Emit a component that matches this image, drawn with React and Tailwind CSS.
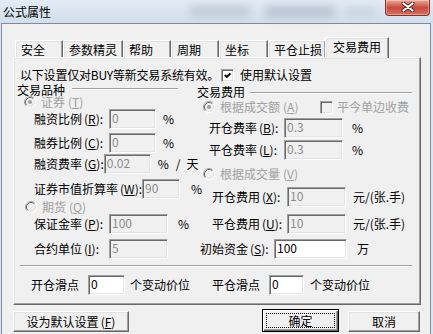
import React from 'react';

const SUNKEN =
  'border border-t-[#a0a0a0] border-l-[#a0a0a0] border-b-white border-r-white shadow-[inset_1px_1px_0_#696969,inset_-1px_-1px_0_#e3e3e3]';

function Radio({ checked }) {
  return (
    <svg width="12" height="12" viewBox="0 0 12 12" className="shrink-0">
      <circle cx="6" cy="6" r="5" fill="#f0f0f0" />
      <path d="M2.11 9.89A5.5 5.5 0 0 1 9.89 2.11" stroke="#a0a0a0" fill="none" />
      <path d="M9.89 2.11A5.5 5.5 0 0 1 2.11 9.89" stroke="#ffffff" fill="none" />
      <path d="M2.82 9.18A4.5 4.5 0 0 1 9.18 2.82" stroke="#696969" fill="none" />
      <path d="M9.18 2.82A4.5 4.5 0 0 1 2.82 9.18" stroke="#e3e3e3" fill="none" />
      {checked && <circle cx="6" cy="6" r="2" fill="#a0a0a0" />}
    </svg>
  );
}

function Check({ checked, disabled }) {
  return (
    <div
      className={`w-[13px] h-[13px] shrink-0 flex items-center justify-center ${SUNKEN} ${
        disabled ? 'bg-[#f0f0f0]' : 'bg-white'
      }`}
    >
      {checked && (
        <svg width="7" height="7" viewBox="0 0 7 7">
          <polyline points="0.8,3 2.8,5 6.4,1.4" stroke="#000" strokeWidth="1.9" fill="none" />
        </svg>
      )}
    </div>
  );
}

function Edit({ w, v, white }) {
  return (
    <div
      className={`${w} h-[20px] shrink-0 pl-[2px] pt-[2px] leading-[12px] ${SUNKEN} ${
        white ? 'bg-white text-black' : 'bg-[#f0f0f0] text-[#8c8c8c]'
      }`}
    >
      {v}
    </div>
  );
}

function L({ t, m, tail = ':' }) {
  return (
    <span className="whitespace-nowrap">
      {t}
      <span className="ml-[2px]">
        (<span className="underline underline-offset-1">{m}</span>)
      </span>
      {tail}
    </span>
  );
}

function Etched({ cls }) {
  return <div className={`h-0 border-t border-t-[#a0a0a0] border-b border-b-white ${cls}`} />;
}

const TABS = [
  { t: '安全', w: 'w-[48px]' },
  { t: '参数精灵', w: 'w-[60px]' },
  { t: '帮助', w: 'w-[48px]' },
  { t: '周期', w: 'w-[48px]' },
  { t: '坐标', w: 'w-[49px]' },
  { t: '平仓止损', w: 'w-[58px]' },
];

export default function App() {
  return (
    <div className="w-[433px] h-[334px] overflow-hidden relative bg-[#dce6f2] text-black text-[12px] leading-[12px] font-['Noto_Sans_CJK_SC','Noto_Sans',sans-serif]">
      {/* title bar */}
      <div className="h-[23px] flex items-start relative bg-gradient-to-b from-[#e3ebf5] to-[#d2deec]">
        <div className="absolute left-[190px] top-[6px] w-[60px] h-[10px] bg-[#aab7c6] blur-[4px] opacity-60" />
        <div className="absolute left-[265px] top-[6px] w-[70px] h-[11px] bg-[#9fadbd] blur-[4px] opacity-60" />
        <div className="absolute left-[345px] top-[8px] w-[30px] h-[8px] bg-[#b3bfcc] blur-[4px] opacity-50" />
        <div className="relative pl-[3px] pt-[6px] text-[12px] leading-[12px]">公式属性</div>
        <div className="relative ml-auto mr-[3px] w-[45px] h-[16px] rounded-b-[4px] border border-t-0 border-[#8b2f25] bg-gradient-to-b from-[#e9a797] via-[#c94a3c] to-[#d8705e] flex items-start justify-center pt-[2px] shadow-[inset_0_0_0_1px_rgba(255,255,255,0.35)]">
          <svg width="14" height="10" viewBox="0 0 14 10">
            <path d="M2.5 1.5 L11.5 8.5 M11.5 1.5 L2.5 8.5" stroke="#4a2a26" strokeWidth="4" strokeLinecap="round" />
            <path d="M2.5 1.5 L11.5 8.5 M11.5 1.5 L2.5 8.5" stroke="#ffffff" strokeWidth="2.2" strokeLinecap="round" />
          </svg>
        </div>
      </div>

      {/* client */}
      <div className="ml-[1px] mr-[2px] h-[311px] border-l border-r border-t border-[#7d8b9a] bg-[#f0f0f0] flex flex-col">
        {/* tabs */}
        <div className="mt-[13px] ml-[13px] h-[20px] flex items-end">
          {TABS.map((tb) => (
            <div
              key={tb.t}
              className={`${tb.w} h-[17px] pl-[5px] pt-[3px] rounded-tl-[2px] border-t border-l border-white border-r border-r-[#696969] shadow-[inset_-1px_0_0_#a0a0a0,inset_1px_1px_0_#e3e3e3] whitespace-nowrap`}
            >
              {tb.t}
            </div>
          ))}
          <div className="relative z-10 -ml-[1px] -mb-[1px] w-[64px] h-[21px] pl-[7px] pt-[3px] rounded-tl-[2px] bg-[#f0f0f0] border-t border-l border-white border-r border-r-[#696969] shadow-[inset_-1px_0_0_#a0a0a0,inset_1px_1px_0_#e3e3e3] whitespace-nowrap">
            交易费用
          </div>
        </div>

        {/* panel */}
        <div className="ml-[11px] w-[408px] h-[248px] flex flex-col border-t border-l border-white border-r border-b border-r-[#696969] border-b-[#696969] shadow-[inset_-1px_-1px_0_#a0a0a0,inset_1px_1px_0_#e3e3e3]">
          {/* notice row */}
          <div className="mt-[10px] h-[14px] flex items-center pl-[6px]">
            <span className="w-[201px] whitespace-nowrap tracking-[-0.2px]">以下设置仅对BUY等新交易系统有效。</span>
            <Check checked />
            <span className="ml-[6px]">使用默认设置</span>
          </div>

          <div className="flex">
            {/* left column */}
            <div className="w-[183px] flex flex-col">
              <div className="mt-[2px] h-[12px] flex items-start pl-[3px]">
                <span className="whitespace-nowrap">交易品种</span>
                <Etched cls="mt-[4px] ml-[7px] w-[106px]" />
              </div>
              <div className="h-[12px] flex items-center pl-[10px] text-[#a0a0a0]">
                <Radio checked />
                <span className="ml-[5px]">
                  证券<span className="ml-[3px]">(<span className="underline underline-offset-1">T</span>)</span>
                </span>
              </div>
              <div className="mt-[1px] h-[20px] flex items-center pl-[20px]">
                <div className="w-[75px]"><L t="融资比例" m="R" /></div>
                <Edit w="w-[47px]" v="0" />
                <span className="ml-[7px]">%</span>
              </div>
              <div className="mt-[4px] h-[20px] flex items-center pl-[20px]">
                <div className="w-[75px]"><L t="融券比例" m="C" /></div>
                <Edit w="w-[47px]" v="0" />
                <span className="ml-[7px]">%</span>
              </div>
              <div className="mt-[1px] h-[20px] flex items-center pl-[20px]">
                <div className="w-[75px]"><L t="融资费率" m="G" /></div>
                <Edit w="w-[47px]" v="0.02" />
                <span className="ml-[7px]">%</span>
                <span className="ml-[7px]">/</span>
                <span className="ml-[6px]">天</span>
              </div>
              <div className="mt-[5px] h-[20px] flex items-center pl-[20px]">
                <div className="w-[111px]"><L t="证券市值折算率" m="W" /></div>
                <Edit w="w-[38px]" v="90" />
                <span className="ml-[11px]">%</span>
              </div>
              <div className="mt-[2px] h-[12px] flex items-center pl-[11px] text-[#a0a0a0]">
                <Radio />
                <span className="ml-[5px]">
                  期货<span className="ml-[3px]">(<span className="underline underline-offset-1">Q</span>)</span>
                </span>
              </div>
              <div className="mt-[1px] h-[20px] flex items-center pl-[20px]">
                <div className="w-[75px]"><L t="保证金率" m="P" /></div>
                <Edit w="w-[59px]" v="100" />
                <span className="ml-[10px]">%</span>
              </div>
              <div className="mt-[5px] h-[20px] flex items-center pl-[20px]">
                <div className="w-[75px]"><L t="合约单位" m="I" /></div>
                <Edit w="w-[59px]" v="5" />
              </div>
            </div>

            {/* right column */}
            <div className="flex-1 flex flex-col">
              <div className="mt-[4px] h-[12px] flex items-start">
                <span className="whitespace-nowrap">交易费用</span>
                <Etched cls="mt-[6px] ml-[5px] w-[162px]" />
              </div>
              <div className="mt-[3px] h-[12px] flex items-center pl-[6px] text-[#a0a0a0]">
                <Radio checked />
                <span className="ml-[5px] w-[100px] whitespace-nowrap">
                  根据成交额<span className="ml-[3px]">(<span className="underline underline-offset-1">A</span>)</span>
                </span>
                <Check disabled />
                <span className="ml-[4px] whitespace-nowrap">平今单边收费</span>
              </div>
              <div className="mt-[5px] h-[20px] flex items-center pl-[12px]">
                <div className="w-[75px]"><L t="开仓费率" m="B" /></div>
                <Edit w="w-[59px]" v="0.3" />
                <span className="ml-[9px]">%</span>
              </div>
              <div className="mt-[2px] h-[20px] flex items-center pl-[12px]">
                <div className="w-[75px]"><L t="平仓费率" m="L" /></div>
                <Edit w="w-[59px]" v="0.3" />
                <span className="ml-[9px]">%</span>
              </div>
              <div className="mt-[8px] h-[12px] flex items-center pl-[6px] text-[#a0a0a0]">
                <Radio />
                <span className="ml-[5px] whitespace-nowrap">
                  根据成交量<span className="ml-[3px]">(<span className="underline underline-offset-1">V</span>)</span>
                </span>
              </div>
              <div className="mt-[7px] h-[20px] flex items-center pl-[15px]">
                <div className="w-[75px]"><L t="开仓费用" m="X" /></div>
                <Edit w="w-[59px]" v="10" />
                <span className="ml-[7px] whitespace-nowrap">元/(张.手)</span>
              </div>
              <div className="mt-[7px] h-[20px] flex items-center pl-[15px]">
                <div className="w-[75px]"><L t="平仓费用" m="U" /></div>
                <Edit w="w-[59px]" v="10" />
                <span className="ml-[7px] whitespace-nowrap">元/(张.手)</span>
              </div>
              <div className="mt-[5px] h-[20px] flex items-center pl-[3px]">
                <div className="w-[74px]"><L t="初始资金" m="S" /></div>
                <Edit w="w-[73px]" v="100" white />
                <span className="ml-[10px]">万</span>
              </div>
            </div>
          </div>

          <Etched cls="mt-[6px] ml-[6px] w-[392px]" />

          <div className="mt-[8px] h-[20px] flex items-center pl-[17px]">
            <div className="w-[181px] flex items-center">
              <span className="w-[57px]">开仓滑点</span>
              <Edit w="w-[37px]" v="0" white />
              <span className="ml-[5px] whitespace-nowrap">个变动价位</span>
            </div>
            <span className="w-[57px]">平仓滑点</span>
            <Edit w="w-[35px]" v="0" white />
            <span className="ml-[6px] whitespace-nowrap">个变动价位</span>
          </div>
        </div>

        {/* buttons */}
        <div className="flex items-start ml-[11px]">
          <div className="mt-[6px] w-[116px] h-[21px] flex items-center justify-center border border-t-white border-l-white border-b-[#696969] border-r-[#696969] shadow-[inset_-1px_-1px_0_#a0a0a0,inset_1px_1px_0_#e3e3e3] whitespace-nowrap">
            <L t="设为默认设置" m="F" tail="" />
          </div>
          <div className="mt-[4px] ml-[133px] w-[77px] h-[23px] p-[3px] border border-black shadow-[inset_1px_1px_0_#fff,inset_-1px_-1px_0_#696969,inset_-2px_-2px_0_#a0a0a0]">
            <div className="w-full h-full border border-dotted border-black flex items-center justify-center">确定</div>
          </div>
          <div className="mt-[6px] ml-[9px] w-[72px] h-[21px] flex items-center justify-center border border-t-white border-l-white border-b-[#696969] border-r-[#696969] shadow-[inset_-1px_-1px_0_#a0a0a0,inset_1px_1px_0_#e3e3e3]">
            取消
          </div>
        </div>
      </div>
    </div>
  );
}
